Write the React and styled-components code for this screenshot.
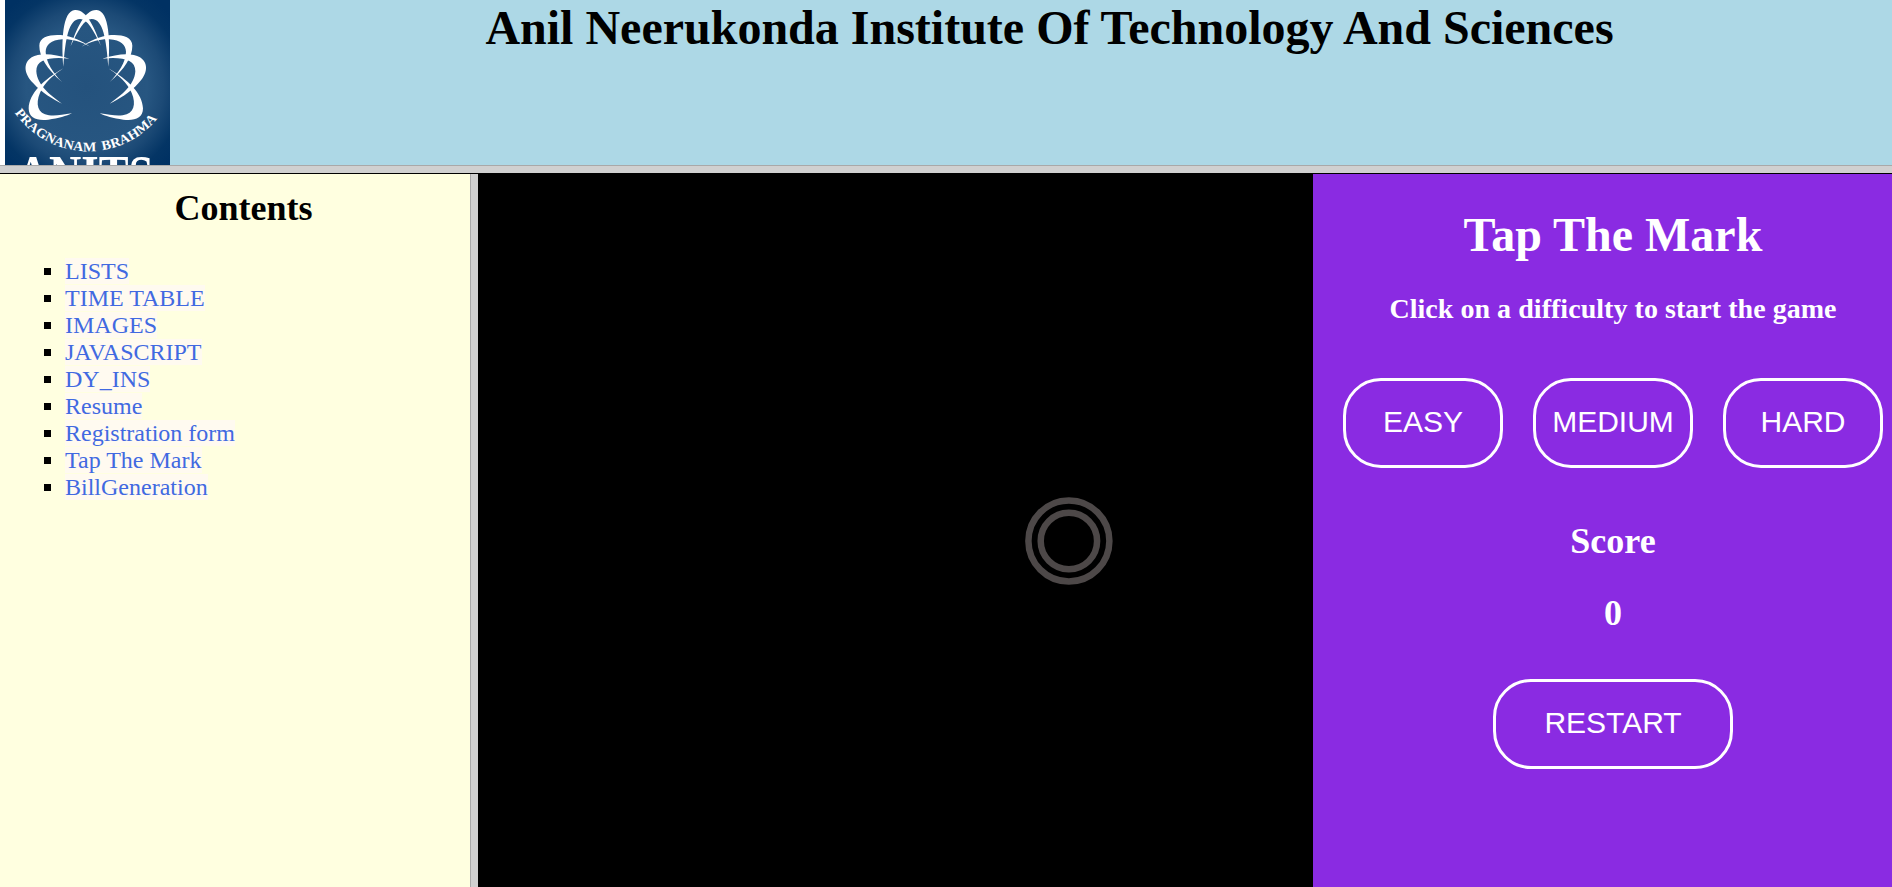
import React, { useState } from 'react';
import styled, { createGlobalStyle } from 'styled-components';

const GlobalStyle = createGlobalStyle`
  * { box-sizing: border-box; }
  html, body { margin: 0; padding: 0; overflow: hidden; }
  body { font-family: "Liberation Serif", "Times New Roman", serif; }
`;

const Page = styled.div`
  display: flex;
  flex-direction: column;
  width: 100vw;
  height: 100vh;
  background: #000;
`;

const Header = styled.header`
  display: flex;
  flex: none;
  height: 165px;
  background: linear-gradient(to right, #fff 5px, lightblue 5px);
  padding-left: 5px;
`;

const Logo = styled.svg`
  flex: none;
  display: block;
  width: 165px;
  height: 165px;
`;

const SiteTitle = styled.h1`
  flex: 1;
  margin: 0;
  padding-left: 37px;
  font-size: 48px;
  line-height: 55px;
  text-align: center;
  white-space: nowrap;
`;

const HorizontalSplitter = styled.div`
  flex: none;
  height: 9px;
  background: #d0d0d0;
  border-top: 1px solid #a9a9a9;
  border-bottom: 1px solid #000;
`;

const VerticalSplitter = styled.div`
  flex: none;
  width: 8px;
  background: #d0d0d0;
  border-left: 1px solid #a9a9a9;
`;

const Body = styled.div`
  display: flex;
  flex: 1;
  min-height: 0;
`;

const Sidebar = styled.nav`
  flex: none;
  width: 470px;
  background: #ffffe0;
`;

const SidebarTitle = styled.h2`
  margin: 14px 0 0;
  padding-left: 17px;
  font-size: 36px;
  line-height: 41px;
  text-align: center;
`;

const LinkList = styled.ul`
  margin: 29px 0 0;
  padding: 0 0 0 44px;
  list-style: none;
`;

const LinkItem = styled.li`
  display: flex;
  align-items: flex-start;
  height: 27px;
  gap: 14px;
  &::before {
    content: "";
    align-self: center;
    width: 7px;
    height: 7px;
    background: #000;
  }
`;

const SideLink = styled.a`
  height: 26px;
  padding-top: 1px;
  font-size: 24px;
  line-height: 25px;
  color: royalblue;
  background: floralwhite;
  text-decoration: none;
`;

const Board = styled.main`
  flex: 1;
  position: relative;
  background: #000;
`;

const Mark = styled.button`
  position: absolute;
  left: 547px;
  top: 323px;
  width: 88px;
  height: 88px;
  padding: 0;
  border: 0;
  border-radius: 50%;
  background: transparent;
  color: #4d4848;
  svg { display: block; }
`;

const Controls = styled.aside`
  flex: none;
  display: flex;
  flex-direction: column;
  align-items: center;
  width: 579px;
  padding-left: 21px;
  background: blueviolet;
  color: #fff;
`;

const GameTitle = styled.h1`
  margin: 33px 0 0;
  font-size: 48px;
  line-height: 55px;
`;

const Hint = styled.h3`
  margin: 31px 0 0;
  font-size: 28px;
  line-height: 32px;
  letter-spacing: 0.04px;
`;

const LevelRow = styled.div`
  display: flex;
  gap: 30px;
  margin-top: 53px;
`;

const GameButton = styled.button`
  width: ${(p) => (p.$wide ? 240 : 160)}px;
  height: 90px;
  padding: 0 0 2px;
  border: 3px solid #fff;
  border-radius: 38px;
  background: transparent;
  color: #fff;
  font: 30px "Liberation Sans", Arial, sans-serif;
`;

const ScoreText = styled.h2`
  margin: ${(p) => p.$top}px 0 0;
  font-size: 36px;
  line-height: 41px;
`;

const RestartRow = styled.div`
  margin-top: 45px;
`;

const links = [
  'LISTS', 'TIME TABLE', 'IMAGES', 'JAVASCRIPT', 'DY_INS', 'Resume',
  'Registration form', 'Tap The Mark', 'BillGeneration',
];

const Petals = () => (
  <g fill="#fff">
    <path d="M190 200 C184 130 186 32 225 30 C260 28 285 85 303 138 C280 90 262 57 240 57 C205 57 196 120 190 200Z" />
    <path d="M186 246 C140 206 118 170 118 137 C118 110 150 103 182 105 C215 108 250 125 270 140 C240 124 215 117 187 118 C152 120 138 135 137 155 C137 185 160 220 186 246Z" />
    <path d="M208 176 C160 160 118 158 95 172 C68 190 72 222 100 250 C125 278 160 299 186 311 C150 285 111 255 109 214 C108 178 150 170 208 176Z" />
    <path d="M190 205 C130 240 88 280 86 325 C86 355 112 363 145 359 C175 355 200 348 216 340 C180 346 155 350 135 343 C108 332 107 300 126 266 C143 240 165 222 190 205Z" />
  </g>
);

const CollegeLogo = () => (
  <Logo viewBox="15 0 495 495" role="img" aria-label="ANITS">
    <defs>
      <radialGradient id="glow" gradientUnits="userSpaceOnUse" cx="260" cy="260" r="330">
        <stop offset="0" stopColor="#24527d" />
        <stop offset="0.55" stopColor="#275681" />
        <stop offset="0.7" stopColor="#1c4a76" />
        <stop offset="0.88" stopColor="#043565" />
        <stop offset="1" stopColor="#003163" />
      </radialGradient>
      <path id="mottoArc" d="M44 338 A268 268 0 0 0 484 340" />
    </defs>
    <rect x="15" width="495" height="495" fill="url(#glow)" />
    <Petals />
    <g transform="translate(515 0) scale(-1 1)"><Petals /></g>
    <g fill="#fff" fontFamily="Liberation Serif, serif" fontWeight="bold">
      <text fontSize="40" wordSpacing="8">
        <textPath href="#mottoArc" textLength="496" lengthAdjust="spacingAndGlyphs">PRAGNANAM BRAHMA</textPath>
      </text>
      <text x="50" y="577" fontSize="160" textLength="410" lengthAdjust="spacingAndGlyphs">ANITS</text>
    </g>
  </Logo>
);

const Rings = () => (
  <svg width="88" height="88" viewBox="0 0 88 88" fill="none" stroke="currentColor" strokeWidth="6.5">
    <circle cx="43.9" cy="44" r="40.5" />
    <circle cx="43.9" cy="44" r="28.2" />
  </svg>
);

export default function App() {
  const [score, setScore] = useState(0);
  return (
    <Page>
      <GlobalStyle />
      <Header>
        <CollegeLogo />
        <SiteTitle>Anil Neerukonda Institute Of Technology And Sciences</SiteTitle>
      </Header>
      <HorizontalSplitter />
      <Body>
        <Sidebar>
          <SidebarTitle>Contents</SidebarTitle>
          <LinkList>
            {links.map((label) => (
              <LinkItem key={label}><SideLink href="#">{label}</SideLink></LinkItem>
            ))}
          </LinkList>
        </Sidebar>
        <VerticalSplitter />
        <Board>
          <Mark aria-label="Mark" onClick={() => setScore(score + 1)}><Rings /></Mark>
        </Board>
        <Controls>
          <GameTitle>Tap The Mark</GameTitle>
          <Hint>Click on a difficulty to start the game</Hint>
          <LevelRow>
            <GameButton>EASY</GameButton>
            <GameButton>MEDIUM</GameButton>
            <GameButton>HARD</GameButton>
          </LevelRow>
          <ScoreText $top={53}>Score</ScoreText>
          <ScoreText $top={31}>{score}</ScoreText>
          <RestartRow>
            <GameButton $wide onClick={() => setScore(0)}>RESTART</GameButton>
          </RestartRow>
        </Controls>
      </Body>
    </Page>
  );
}
